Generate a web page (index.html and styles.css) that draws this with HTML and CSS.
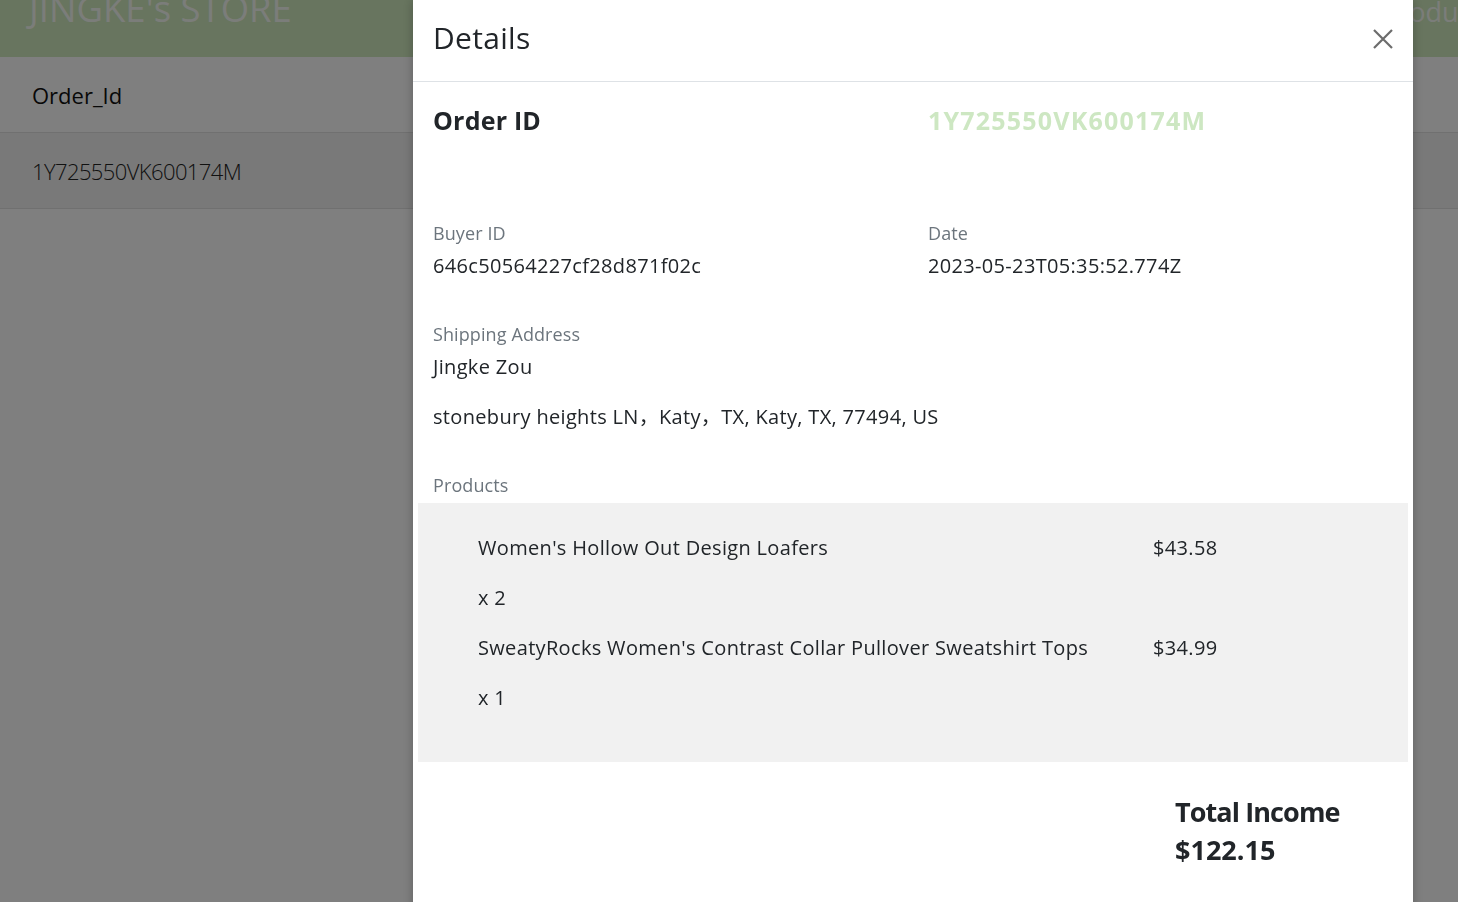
FILE: index.html
```html
<!DOCTYPE html>
<html lang="en">
<head>
<meta charset="utf-8">
<title>Order Details</title>
<link rel="stylesheet" href="styles.css">
</head>
<body>
<header class="navbar">
  <span class="brand">JINGKE's STORE</span>
  <nav class="nav"><a class="nav-link">Products</a></nav>
</header>
<div class="orders">
  <div class="orders-head"><span class="cell">Order_Id</span></div>
  <div class="orders-row"><span class="cell light">1Y725550VK600174M</span></div>
</div>

<div class="backdrop"></div>

<div class="modal">
  <div class="modal-header">
    <h4 class="modal-title">Details</h4>
    <button class="btn-close" aria-label="Close">
      <svg width="20" height="20" viewBox="0 0 20 20"><path d="M1 1 L19 19 M19 1 L1 19" stroke="#6c6c6c" stroke-width="2.2" fill="none"/></svg>
    </button>
  </div>
  <div class="modal-body">
    <div class="two-col head-row">
      <h5 class="order-label">Order ID</h5>
      <h5 class="order-value">1Y725550VK600174M</h5>
    </div>
    <div class="two-col">
      <div class="field">
        <div class="label">Buyer ID</div>
        <p>646c50564227cf28d871f02c</p>
      </div>
      <div class="field">
        <div class="label">Date</div>
        <p>2023-05-23T05:35:52.774Z</p>
      </div>
    </div>
    <div class="field">
      <div class="label">Shipping Address</div>
      <p>Jingke Zou</p>
      <p>stonebury heights LN，Katy，TX, Katy, TX, 77494, US</p>
    </div>
    <div class="label products-label">Products</div>
    <div class="products">
      <div class="product">
        <div>
          <p>Women's Hollow Out Design Loafers</p>
          <p>x 2</p>
        </div>
        <p>$43.58</p>
      </div>
      <div class="product">
        <div>
          <p>SweatyRocks Women's Contrast Collar Pullover Sweatshirt Tops</p>
          <p>x 1</p>
        </div>
        <p>$34.99</p>
      </div>
    </div>
    <div class="total-row">
      <div class="total">
        <div class="total-title">Total Income</div>
        <div class="total-amount">$122.15</div>
      </div>
    </div>
  </div>
</div>
</body>
</html>
```
FILE: styles.css
```css
* { box-sizing: border-box; }
html, body { margin: 0; height: 100%; overflow: hidden; }
body {
  font-family: "Open Sans", "Noto Sans", "Noto Sans CJK SC", sans-serif;
  color: #212529;
  background: #ffffff;
}

.navbar {
  height: 57px;
  background: #d0eabe;
  display: flex;
  align-items: flex-start;
  overflow: hidden;
}
.brand {
  margin-left: 29px;
  margin-top: -17px;
  font-size: 36.5px;
  line-height: 50px;
  color: rgba(255,255,255,0.85);
}
.nav { margin-left: auto; margin-right: -36px; }
.nav-link {
  display: block;
  font-size: 27px;
  line-height: 30px;
  margin-top: -3px;
  color: rgba(255,255,255,0.85);
}

.orders-head, .orders-row {
  display: flex;
  align-items: center;
  border-bottom: 1px solid #e0e0e0;
}
.orders-head { height: 76px; background: #ffffff; }
.orders-row { height: 76px; background: #f2f2f2; }
.cell { padding-left: 32px; font-size: 22px; color: #111; }
.cell.light { font-weight: 300; color: #222; font-size: 22px; letter-spacing: -0.6px; }

.backdrop {
  position: fixed;
  inset: 0;
  background: rgba(0,0,0,0.5);
}

.modal {
  position: fixed;
  top: 0;
  left: 413px;
  width: 1000px;
  height: 960px;
  background: #fff;
  box-shadow: 0 0 10px rgba(0,0,0,0.25);
}
.modal-header {
  height: 82px;
  display: flex;
  align-items: center;
  justify-content: space-between;
  padding: 0 20px;
  border-bottom: 1px solid #dee2e6;
}
.modal-title {
  margin: 0;
  font-size: 30px;
  font-weight: 400;
  line-height: 1.2;
  margin-top: -5px;
  letter-spacing: 0.3px;
}
.btn-close {
  border: 0;
  background: transparent;
  padding: 0;
  width: 20px;
  height: 20px;
  margin-right: 0;
  margin-top: -4px;
}
.btn-close svg { display: block; }

.modal-body { padding: 20px; }
.two-col {
  display: grid;
  grid-template-columns: 465px 465px;
  column-gap: 30px;
}
.head-row { margin-bottom: 80px; }
.order-label, .order-value {
  margin: 0;
  font-size: 25px;
  font-weight: 700;
  line-height: 37px;
}
.order-label { letter-spacing: 0.2px; }
.order-value { color: #cde7c2; letter-spacing: 1.2px; }

.label {
  font-size: 18px;
  line-height: 26px;
  color: #6c757d;
  padding-top: 1px;
  margin-bottom: 3px;
  letter-spacing: 0.1px;
}
p {
  margin: 0 0 18px;
  padding-top: 2px;
  font-size: 20px;
  line-height: 30px;
  letter-spacing: 0.33px;
}
.field { padding-bottom: 21px; }
.products-label { margin-bottom: 5px; }

.products {
  margin: 0 -15px;
  background: #f1f1f1;
  padding: 28px 60px 31px;
}
.product {
  display: grid;
  grid-template-columns: 645px 1fr;
  column-gap: 30px;
}

.total-row {
  display: grid;
  grid-template-columns: 712px 1fr;
  column-gap: 30px;
  padding-top: 31px;
}
.total {
  grid-column: 2;
  font-weight: 700;
  line-height: 38px;
}
.total-title { font-size: 27px; letter-spacing: -0.9px; }
.total-amount { font-size: 27px; letter-spacing: 0; }
```
